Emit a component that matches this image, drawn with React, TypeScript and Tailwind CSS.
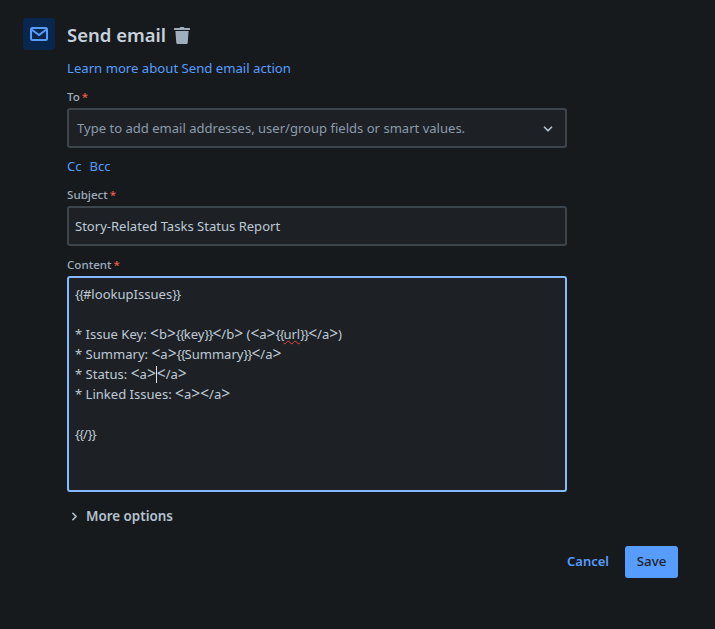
import { ChevronDown, ChevronRight } from "lucide-react";

function Label({ text }: { text: string }) {
  return (
    <div className="h-[16px] flex items-center text-[11.6px] font-medium leading-[16px] text-[#9fadbc]">
      {text}
      <span className="ml-[2px] text-[#f15b50]">*</span>
    </div>
  );
}

function TrashIcon() {
  return (
    <svg width="16" height="17" viewBox="0 0 16 17" className="text-[#9fadbc]" fill="currentColor">
      <path d="M5.5 1 6.2 0h3.6l.7 1H15.5a.5.5 0 0 1 .5.5V3H0V1.5A.5.5 0 0 1 .5 1h5Z" />
      <path d="M1.4 4h13.2l-.9 11.7c-.1.8-.7 1.3-1.4 1.3H3.7c-.7 0-1.3-.5-1.4-1.3L1.4 4Z" />
    </svg>
  );
}

function MailIcon() {
  return (
    <svg width="18" height="14" viewBox="0 0 18 14" fill="none" stroke="#579dff" strokeWidth="2">
      <rect x="1" y="1" width="16" height="12" rx="1.5" />
      <path d="M1.5 2.5 9 8l7.5-5.5" />
    </svg>
  );
}

// braces run narrow and angle brackets run wide in the original editor font
function Code({ text }: { text: string }) {
  return (
    <>
      {text.split(/([{}]|[<>])/).map((part, i) => {
        if (part === "{" || part === "}") {
          return <span key={i} className="tracking-[-1px]">{part}</span>;
        }
        if (part === "<" || part === ">") {
          return <span key={i} className="text-[15.5px] leading-none">{part}</span>;
        }
        return <span key={i}>{part}</span>;
      })}
    </>
  );
}

export default function App() {
  return (
    <div className="min-h-[629px] w-[715px] bg-[#161a1d] pl-[23px] pr-[37px] pt-[18px] font-['Noto_Sans',sans-serif] text-[#b6c2cf] flex items-start gap-[12px] overflow-hidden">
      <div className="w-[32px] h-[32px] rounded-[3px] bg-[#09264f] flex items-center justify-center shrink-0">
        <MailIcon />
      </div>
      <div className="flex-1 min-w-0">
        <div className="w-[500px]">
          <div className="h-[34px] flex items-center gap-[8px]">
            <h1 className="text-[18.5px] font-semibold leading-[24px] text-[#c7d1db]">Send email</h1>
            <TrashIcon />
          </div>
          <a className="mt-[6px] block text-[13.15px] leading-[20px] text-[#579dff]">Learn more about Send email action</a>

          <div className="mt-[11px]">
            <Label text="To" />
          </div>
          <div className="mt-[3px] h-[40px] rounded-[3px] border-2 border-[#3d454c] bg-[#1d2125] pl-[8px] pr-[10px] pt-[1px] flex items-center justify-between">
            <span className="text-[13.05px] text-[#8c9bab]">Type to add email addresses, user/group fields or smart values.</span>
            <ChevronDown size={14} strokeWidth={3} className="text-[#b6c2cf]" />
          </div>

          <div className="mt-[8px] flex gap-[8px] text-[13px] leading-[20px] text-[#579dff]">
            <a>Cc</a>
            <a>Bcc</a>
          </div>

          <div className="mt-[11px]">
            <Label text="Subject" />
          </div>
          <div className="mt-[3px] h-[40px] rounded-[3px] border-2 border-[#3d454c] bg-[#1d2125] px-[6px] pt-[1px] flex items-center text-[13.05px] text-[#bfcad6]">
            Story-Related Tasks Status Report
          </div>

          <div className="mt-[11px]">
            <Label text="Content" />
          </div>
          <div className="mt-[3px] h-[216px] rounded-[3px] border-2 border-[#85b8ff] bg-[#1d2125] px-[6px] py-[6px] text-[13.05px] leading-[20px] text-[#bfcad6]">
            <div><Code text="{{#lookupIssues}}" /></div>
            <div className="h-[20px]" />
            <div>
              <Code text="* Issue Key: <b>{{key}}</b> (<a>{{" />
              <span className="underline decoration-wavy decoration-[#e2483d] decoration-1">url</span>
              <Code text="}}</a>)" />
            </div>
            <div><Code text="* Summary: <a>{{Summary}}</a>" /></div>
            <div className="h-[20px] flex items-baseline whitespace-pre">
              <Code text="* Status: <a>" />
              <span className="w-[1px] h-[17px] bg-[#dee4ea] self-center" />
              <Code text="</a>" />
            </div>
            <div><Code text="* Linked Issues: <a></a>" /></div>
            <div className="h-[20px]" />
            <div><Code text="{{/}}" /></div>
          </div>

          <div className="mt-[14px] h-[20px] flex items-center gap-[5px] pl-[1px] text-[13.4px] font-semibold text-[#b6c2cf]">
            <ChevronRight size={13} strokeWidth={3} />
            <span>More options</span>
          </div>
        </div>

        <div className="mt-[20px] w-[611px] flex justify-end items-center gap-[16px]">
          <button className="text-[13px] font-semibold text-[#579dff]">Cancel</button>
          <button className="h-[32px] w-[53px] rounded-[3px] bg-[#579dff] text-[13.3px] font-medium text-[#1d2125]">Save</button>
        </div>
      </div>
    </div>
  );
}
